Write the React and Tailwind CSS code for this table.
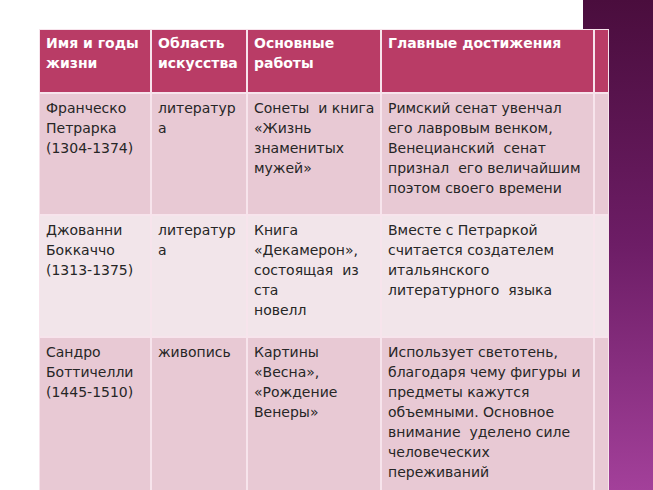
import React from "react";

const rows = [
  {
    bg: "bg-[#e8c9d4]",
    cells: [
      ["Франческо", "Петрарка", "(1304-1374)"],
      ["литератур", "а"],
      ["Сонеты  и книга", "«Жизнь", "знаменитых", "мужей»"],
      ["Римский сенат увенчал", "его лавровым венком,", "Венецианский  сенат", "признал  его величайшим", "поэтом своего времени"],
    ],
  },
  {
    bg: "bg-[#f2e5ea]",
    cells: [
      ["Джованни", "Боккаччо", "(1313-1375)"],
      ["литератур", "а"],
      ["Книга", "«Декамерон»,", "состоящая  из", "ста", "новелл"],
      ["Вместе с Петраркой", "считается создателем", "итальянского", "литературного  языка"],
    ],
  },
  {
    bg: "bg-[#e8c9d4]",
    cells: [
      ["Сандро", "Боттичелли", "(1445-1510)"],
      ["живопись"],
      ["Картины", "«Весна»,", "«Рождение", "Венеры»"],
      ["Использует светотень,", "благодаря чему фигуры и", "предметы кажутся", "объемными. Основное", "внимание  уделено силе", "человеческих", "переживаний"],
    ],
  },
];

const header = [
  ["Имя и годы", "жизни"],
  ["Область", "искусства"],
  ["Основные", "работы"],
  ["Главные достижения"],
];

function Lines({ lines }) {
  return (
    <div className="flex flex-col">
      {lines.map((l, i) => (
        <span key={i} className="whitespace-pre leading-[20px]">
          {l}
        </span>
      ))}
    </div>
  );
}

export default function App() {
  return (
    <div
      className="relative w-[653px] h-[490px] overflow-hidden bg-white"
      style={{ fontFamily: '"DejaVu Sans", "Open Sans", sans-serif' }}
    >
      <div className="absolute right-0 top-0 w-[70px] h-[490px] bg-gradient-to-b from-[#4a0d3d] via-[#6d1d66] to-[#a3409a]" />
      <div className="relative pt-[29px] pl-[39px]">
        <div className="grid grid-cols-[110px_94px_132px_211px_13px] grid-rows-[62px_120px_120px_160px] gap-[2px] p-[1px] bg-[#f7e4ec] w-[570px]">
          {header.map((h, i) => (
            <div key={i} className="bg-[#b93c66] text-white font-bold text-[14px] pl-[6px] pt-[3px]">
              <Lines lines={h} />
            </div>
          ))}
          <div className="bg-[#b93c66]" />
          {rows.map((r, ri) => (
            <React.Fragment key={ri}>
              {r.cells.map((c, ci) => (
                <div key={ci} className={`${r.bg} text-[#262626] text-[14px] pl-[6px] pt-[4px]`}>
                  <Lines lines={c} />
                </div>
              ))}
              <div className={r.bg} />
            </React.Fragment>
          ))}
        </div>
      </div>
    </div>
  );
}
